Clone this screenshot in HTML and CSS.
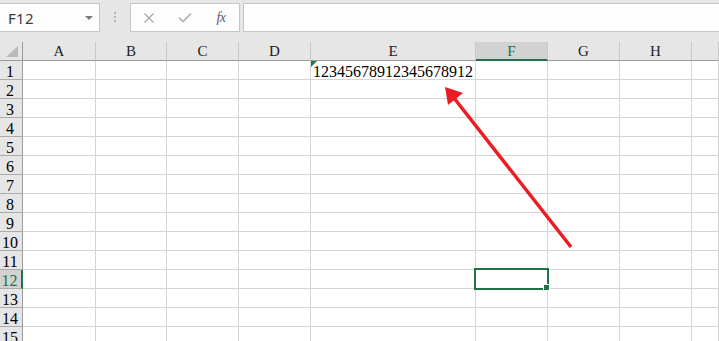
FILE: index.html
```html
<!DOCTYPE html>
<html lang="zh-CN">
<head>
    <meta charset="UTF-8">
    <title>Sheet1</title>
    <link rel="stylesheet" href="styles.css">
</head>
<body>
<div class="app">
    <div class="formula-bar">
        <div class="name-box">
            <span class="name">F12</span>
            <span class="drop"></span>
        </div>
        <div class="grip"><i></i><i></i><i></i></div>
        <div class="buttons">
            <span class="btn">
                <svg width="12" height="10" viewBox="0 0 12 10"><path d="M1.5 0.5 L10.5 9.5 M10.5 0.5 L1.5 9.5" stroke="#a9a9a9" stroke-width="1.3" fill="none"/></svg>
            </span>
            <span class="btn">
                <svg width="14" height="10" viewBox="0 0 14 10"><path d="M1 4.5 L5 8.5 L13 0.5" stroke="#b0b0b0" stroke-width="1.6" fill="none"/></svg>
            </span>
            <span class="btn fx">fx</span>
        </div>
        <div class="formula-input"></div>
    </div>

    <div class="sheet">
        <div class="row head">
            <div class="corner"></div>
            <div class="ch">A</div><div class="ch">B</div><div class="ch">C</div><div class="ch">D</div>
            <div class="ch">E</div><div class="ch active">F</div><div class="ch">G</div><div class="ch">H</div><div class="ch"></div>
        </div>
        <div class="row">
            <div class="rh">1</div>
            <div class="c"></div><div class="c"></div><div class="c"></div><div class="c"></div>
            <div class="c text-num">12345678912345678912</div><div class="c"></div><div class="c"></div><div class="c"></div><div class="c"></div>
        </div>
        <div class="row"><div class="rh">2</div><div class="c"></div><div class="c"></div><div class="c"></div><div class="c"></div><div class="c"></div><div class="c"></div><div class="c"></div><div class="c"></div><div class="c"></div></div>
        <div class="row"><div class="rh">3</div><div class="c"></div><div class="c"></div><div class="c"></div><div class="c"></div><div class="c"></div><div class="c"></div><div class="c"></div><div class="c"></div><div class="c"></div></div>
        <div class="row"><div class="rh">4</div><div class="c"></div><div class="c"></div><div class="c"></div><div class="c"></div><div class="c"></div><div class="c"></div><div class="c"></div><div class="c"></div><div class="c"></div></div>
        <div class="row"><div class="rh">5</div><div class="c"></div><div class="c"></div><div class="c"></div><div class="c"></div><div class="c"></div><div class="c"></div><div class="c"></div><div class="c"></div><div class="c"></div></div>
        <div class="row"><div class="rh">6</div><div class="c"></div><div class="c"></div><div class="c"></div><div class="c"></div><div class="c"></div><div class="c"></div><div class="c"></div><div class="c"></div><div class="c"></div></div>
        <div class="row"><div class="rh">7</div><div class="c"></div><div class="c"></div><div class="c"></div><div class="c"></div><div class="c"></div><div class="c"></div><div class="c"></div><div class="c"></div><div class="c"></div></div>
        <div class="row"><div class="rh">8</div><div class="c"></div><div class="c"></div><div class="c"></div><div class="c"></div><div class="c"></div><div class="c"></div><div class="c"></div><div class="c"></div><div class="c"></div></div>
        <div class="row"><div class="rh">9</div><div class="c"></div><div class="c"></div><div class="c"></div><div class="c"></div><div class="c"></div><div class="c"></div><div class="c"></div><div class="c"></div><div class="c"></div></div>
        <div class="row"><div class="rh">10</div><div class="c"></div><div class="c"></div><div class="c"></div><div class="c"></div><div class="c"></div><div class="c"></div><div class="c"></div><div class="c"></div><div class="c"></div></div>
        <div class="row"><div class="rh">11</div><div class="c"></div><div class="c"></div><div class="c"></div><div class="c"></div><div class="c"></div><div class="c"></div><div class="c"></div><div class="c"></div><div class="c"></div></div>
        <div class="row">
            <div class="rh active">12</div>
            <div class="c"></div><div class="c"></div><div class="c"></div><div class="c"></div><div class="c"></div>
            <div class="c selected"></div><div class="c"></div><div class="c"></div><div class="c"></div>
        </div>
        <div class="row"><div class="rh">13</div><div class="c"></div><div class="c"></div><div class="c"></div><div class="c"></div><div class="c"></div><div class="c"></div><div class="c"></div><div class="c"></div><div class="c"></div></div>
        <div class="row"><div class="rh">14</div><div class="c"></div><div class="c"></div><div class="c"></div><div class="c"></div><div class="c"></div><div class="c"></div><div class="c"></div><div class="c"></div><div class="c"></div></div>
        <div class="row"><div class="rh">15</div><div class="c"></div><div class="c"></div><div class="c"></div><div class="c"></div><div class="c"></div><div class="c"></div><div class="c"></div><div class="c"></div><div class="c"></div></div>
    </div>

    <!-- annotation arrow drawn over the sheet -->
    <svg class="arrow" width="719" height="341" viewBox="0 0 719 341">
        <line x1="571" y1="247" x2="454" y2="98" stroke="#ed1c24" stroke-width="3.5"/>
        <polygon points="445,87 448,105 463,93" fill="#ed1c24"/>
    </svg>
</div>
</body>
</html>
```

FILE: styles.css
```css
body {
    margin: 0;
    overflow: hidden;
    background: #ffffff;
}
.app {
    position: relative;
    width: 719px;
    height: 341px;
    overflow: hidden;
    font-family: "Liberation Serif", serif;
}

/* formula bar */
.formula-bar {
    display: flex;
    align-items: flex-start;
    height: 42px;
    padding-top: 3px;
    box-sizing: border-box;
    background: #e6e6e6;
}
.name-box {
    display: flex;
    align-items: center;
    justify-content: space-between;
    width: 101px;
    height: 29px;
    margin-left: -1px;
    padding: 0 6px 0 8px;
    box-sizing: border-box;
    background: #fdfdfd;
    border: 1px solid #c6c6c6;
}
.name {
    font-family: "Noto Sans", sans-serif;
    font-size: 15px;
    color: #3b3b3b;
    letter-spacing: 0.3px;
}
.drop {
    width: 0;
    height: 0;
    border-left: 4px solid transparent;
    border-right: 4px solid transparent;
    border-top: 4px solid #7a7a7a;
    margin-top: 1px;
}
.grip {
    display: flex;
    flex-direction: column;
    align-items: center;
    gap: 2px;
    width: 30px;
    padding-top: 9px;
}
.grip i {
    display: block;
    width: 2px;
    height: 2px;
    background: #b4b4b4;
}
.buttons {
    display: flex;
    width: 110px;
    height: 29px;
    box-sizing: border-box;
    background: #fdfdfd;
    border: 1px solid #c6c6c6;
}
.btn {
    display: flex;
    align-items: center;
    justify-content: center;
    width: 36px;
    height: 27px;
}
.fx {
    font-family: "Liberation Serif", serif;
    font-style: italic;
    font-size: 14px;
    color: #5c5c5c;
    letter-spacing: -0.5px;
}
.formula-input {
    flex: 1;
    height: 29px;
    margin-left: 3px;
    box-sizing: border-box;
    background: #fdfdfd;
    border: 1px solid #c6c6c6;
    border-right: none;
}

/* grid */
.row {
    display: grid;
    grid-template-columns: 23px 73px 71px 72px 72px 165px 72px 72px 72px 1fr;
    height: 19px;
}
.row > div {
    box-sizing: border-box;
    height: 19px;
    line-height: 21px;
    font-size: 16px;
    color: #000;
}
.c {
    border-right: 1px solid #d4d4d4;
    border-bottom: 1px solid #d4d4d4;
}
.rh {
    background: #e6e6e6;
    border-right: 1px solid #9b9b9b;
    border-bottom: 1px solid #ababab;
    text-align: center;
    color: #222;
    overflow: hidden;
    white-space: nowrap;
    padding-right: 2px;
}
.rh.active {
    background: #d2d2d2;
    color: #217346;
    border-right: 2px solid #217346;
}
.row.head > div {
    background: #e6e6e6;
    border-right: 1px solid #c8c8c8;
    border-bottom: 1px solid #9b9b9b;
    text-align: center;
    font-size: 15px;
    line-height: 19px;
    color: #222;
}
.row.head > .corner {
    position: relative;
    border-right-color: #9b9b9b;
}
.corner::after {
    content: "";
    position: absolute;
    right: 4px;
    bottom: 3px;
    border-left: 12px solid transparent;
    border-bottom: 11px solid #b9b9b9;
}
.row.head > .ch.active {
    background: #d2d2d2;
    color: #217346;
    border-bottom: 2px solid #217346;
}

.text-num {
    position: relative;
    padding-left: 2px;
    white-space: nowrap;
}
.text-num::before {
    content: "";
    position: absolute;
    left: 0;
    top: 0;
    border-top: 6px solid #1f7a3f;
    border-right: 6px solid transparent;
}

.selected {
    position: relative;
}
.selected::after {
    content: "";
    position: absolute;
    left: -2px;
    top: -2px;
    width: 75px;
    height: 22px;
    box-sizing: border-box;
    border: 2px solid #217346;
}
.selected::before {
    content: "";
    position: absolute;
    right: -3px;
    bottom: -3px;
    width: 5px;
    height: 5px;
    background: #217346;
    border: 1px solid #fff;
    z-index: 1;
}

.arrow {
    position: absolute;
    left: 0;
    top: 0;
    pointer-events: none;
}
```
